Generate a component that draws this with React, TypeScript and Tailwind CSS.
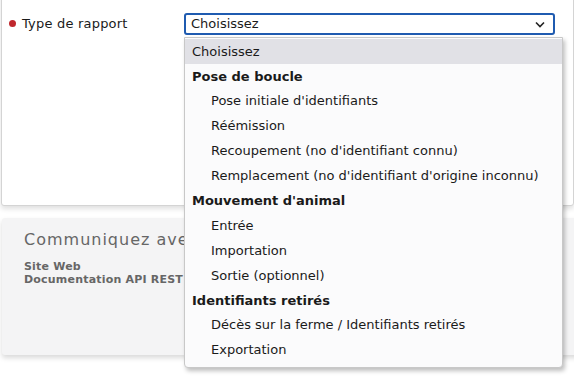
export default function App() {
  const rows: { label: string; group?: boolean; active?: boolean }[] = [
    { label: "Choisissez", active: true },
    { label: "Pose de boucle", group: true },
    { label: "Pose initiale d'identifiants" },
    { label: "Réémission" },
    { label: "Recoupement (no d'identifiant connu)" },
    { label: "Remplacement (no d'identifiant d'origine inconnu)" },
    { label: "Mouvement d'animal", group: true },
    { label: "Entrée" },
    { label: "Importation" },
    { label: "Sortie (optionnel)" },
    { label: "Identifiants retirés", group: true },
    { label: "Décès sur la ferme / Identifiants retirés" },
    { label: "Exportation" },
  ];

  return (
    <div className="relative h-[378px] w-[574px] overflow-hidden bg-white font-['DejaVu_Sans',sans-serif] text-[#1a1a1a]">
      <div className="ml-[1px] mt-[-10px] h-[216px] rounded-b-[3px] border border-[#d4d4d4] bg-white pl-[7px] pt-[22px] shadow-[0_3px_5px_rgba(0,0,0,0.12)]">
        <div className="flex items-start">
          <div className="flex w-[175px] items-center gap-[6px] pt-[1px]">
            <span className="h-[7px] w-[7px] rounded-full bg-[#c0282d]" />
            <span className="text-[13px] tracking-[0.2px]">Type de rapport</span>
          </div>
          <div className="flex h-[22px] w-[371px] items-center justify-between rounded-[3px] border-2 border-[#1f5bb0] bg-white pl-[5px] pr-[8px] text-[13px]">
            <span>Choisissez</span>
            <svg width="10" height="7" viewBox="0 0 10 7" fill="none">
              <path d="M1 1.5 5 5.5 9 1.5" stroke="#222" strokeWidth="1.6" />
            </svg>
          </div>
        </div>
      </div>

      <div className="ml-[2px] mr-[-10px] mt-[12px] h-[137px] rounded-[3px] bg-[#f4f4f5] pl-[22px] pt-[10px] text-[#666] shadow-[0_3px_5px_rgba(0,0,0,0.15)]">
        <div className="text-[16px] tracking-[1px]">Communiquez avec</div>
        <div className="mt-[8px] text-[11px] font-bold leading-[13px] tracking-[0.2px]">
          <div>Site Web</div>
          <div>Documentation API REST</div>
        </div>
      </div>

      <div className="absolute left-[184px] top-[37px] w-[379px] rounded-b-[4px] border border-[#c8c8c8] bg-[#fbfbfc] pb-[4px] pt-[1px] shadow-[2px_3px_4px_rgba(0,0,0,0.25)]">
        {rows.map((r) => (
          <div
            key={r.label}
            className={
              "flex h-[24.9px] items-center text-[13px] " +
              (r.group ? "pl-[7px] font-bold" : r.active ? "bg-[#e1e1e6] pl-[7px]" : "pl-[26px]")
            }
          >
            {r.label}
          </div>
        ))}
      </div>
    </div>
  );
}
